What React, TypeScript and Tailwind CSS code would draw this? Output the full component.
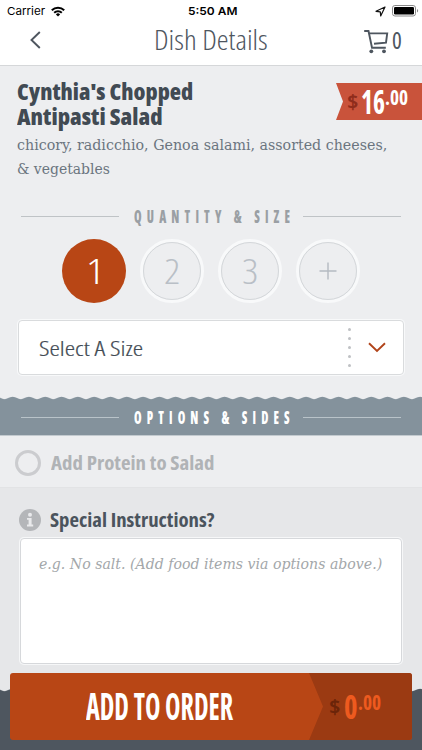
import { useLayoutEffect, useRef } from "react";
import type { ReactNode } from "react";

const sans = "font-['Open_Sans','Noto_Sans',sans-serif] [font-stretch:75%]";
const serif = "font-['DejaVu_Serif_Condensed','DejaVu_Serif',serif]";

// Squeezes one line of text to the width of its box
function Fit({ className, children }: { className: string; children: ReactNode }) {
  const box = useRef<HTMLSpanElement>(null);
  const text = useRef<HTMLSpanElement>(null);

  useLayoutEffect(() => {
    if (!box.current || !text.current) return;
    const scale = box.current.clientWidth / text.current.offsetWidth;
    text.current.style.transform = `scaleX(${scale})`;
  }, []);

  return (
    <span ref={box} className={`block shrink-0 whitespace-nowrap ${className}`}>
      <span ref={text} className="inline-block origin-left align-top">
        {children}
      </span>
    </span>
  );
}

function StatusBar() {
  return (
    <div className="flex h-[22px] items-center justify-between pl-[7px] pr-1 font-['Inter',sans-serif] text-[11px] leading-[22px] text-black">
      <div className="flex w-[140px] items-center gap-[6px]">
        <Fit className="w-[38px]">Carrier</Fit>
        <svg width="14" height="11" viewBox="0 0 14 11" fill="none" stroke="#000" strokeWidth="2">
          <path d="M0.8 4.2a8.8 8.8 0 0 1 12.4 0" />
          <path d="M3.2 6.8a5.4 5.4 0 0 1 7.6 0" />
          <path d="M7 10.6 4.9 8.4a3 3 0 0 1 4.2 0z" fill="#000" stroke="none" />
        </svg>
      </div>
      <Fit className="w-[50px] font-semibold">5:50 AM</Fit>
      <div className="flex w-[140px] items-center justify-end gap-[6px]">
        <svg width="11" height="11" viewBox="0 0 11 11" fill="none" stroke="#111" strokeWidth="1.2" strokeLinejoin="round">
          <path d="M10 1 1 5.3l4.3.5.4 4.2z" />
        </svg>
        <svg className="-mr-px" width="27" height="12" viewBox="0 0 27 12">
          <rect x="0.5" y="0.5" width="23" height="10.5" rx="2.4" fill="#fff" stroke="#8a8a8a" />
          <rect x="2" y="2" width="20" height="7.5" rx="1.2" fill="#000" />
          <path d="M25 4v3.6a2 2 0 0 0 0-3.6z" fill="#8a8a8a" />
        </svg>
      </div>
    </div>
  );
}

function Header() {
  return (
    <div className="flex h-[43px] items-start pl-[30px] text-[#4e565f]">
      <svg className="mt-[9px]" width="12" height="18" viewBox="0 0 12 18" fill="none" stroke="#4e565f" strokeWidth="1.9">
        <path d="M9.8 1 1.5 9l8.3 8" />
      </svg>
      <Fit className="ml-[112px] w-[114px] text-[27px] leading-[35px] font-light">Dish Details</Fit>
      <div className="ml-[96px] flex gap-[3px]">
        <svg className="mt-2" width="25" height="24" viewBox="0 0 25 24" fill="none" stroke="#4e565f" strokeWidth="1.9">
          <path d="M0.2 1H4.5L8 17.7H21.8" />
          <path d="M4.9 3.4H23.2L22 12.6 10 13.7" />
          <circle cx="7.3" cy="21.3" r="1.9" fill="#4e565f" stroke="none" />
          <circle cx="20" cy="21.3" r="1.9" fill="#4e565f" stroke="none" />
        </svg>
        <Fit className="w-[10px] text-[23px] font-medium leading-[36px]">0</Fit>
      </div>
    </div>
  );
}

function SectionTitle({ title, text, line }: { title: string; text: string; line: string }) {
  return (
    <div className="flex items-center px-[21px]">
      <div className={`h-px w-[98px] ${line}`} />
      <Fit className={`ml-[15px] w-[161px] text-[18px] font-extrabold leading-[18px] tracking-[0.42em] ${text}`}>
        {title}
      </Fit>
      <div className={`ml-[8px] h-px flex-1 ${line}`} />
    </div>
  );
}

function Quantity({ children }: { children: ReactNode }) {
  return (
    <button className="flex size-16 items-center justify-center rounded-full border-[3px] border-[#f8f9fa]">
      <span className="flex size-[58px] items-center justify-center rounded-full border border-[#d4d7da] text-[#b9bfc6]">
        {children}
      </span>
    </button>
  );
}

function Wave({ color, id }: { color: string; id: string }) {
  return (
    <svg className="block" width="422" height="4">
      <defs>
        <pattern id={id} x="4.5" width="16.3" height="4" patternUnits="userSpaceOnUse">
          <path d="M0 3.2C2.8 3.2 4.4 0.8 8.15 0.8S13.5 3.2 16.3 3.2V4H0z" fill={color} />
        </pattern>
      </defs>
      <rect width="422" height="4" fill={`url(#${id})`} />
    </svg>
  );
}

export default function App() {
  return (
    <div className={`relative flex h-[750px] w-[422px] flex-col overflow-hidden bg-[#edeef0] ${sans}`}>
      <header className="h-[66px] shrink-0 border-b border-[#d5d7d9] bg-white">
        <StatusBar />
        <Header />
      </header>

      {/* Dish */}
      <div className="flex h-[67px] shrink-0 justify-between pl-[17px] pt-[13px]">
        <div className="text-[22px] font-extrabold leading-[25px] text-[#414a53]">
          <Fit className="w-[176px]">Cynthia's Chopped</Fit>
          <Fit className="w-[146px]">Antipasti Salad</Fit>
        </div>
        <div className="mt-1 flex h-[37px] w-[86px] bg-[#c9533b] pl-[11px] font-bold text-white [clip-path:polygon(0_0,100%_0,100%_100%,0_100%,7px_50%)]">
          <Fit className="w-[11px] text-[20px] leading-[37px] text-[#8f2c1b]">$</Fit>
          <Fit className="ml-[3px] w-[24px] text-[33px] leading-[37px]">16</Fit>
          <Fit className="w-[23px] text-[21px] leading-[29px]">.00</Fit>
        </div>
      </div>
      <div className={`h-[74px] shrink-0 pl-[17px] text-[15px] leading-[24px] text-[#6b757f] ${serif}`}>
        <Fit className="w-[370px]">chicory, radicchio, Genoa salami, assorted cheeses,</Fit>
        <Fit className="w-[93px]">&amp; vegetables</Fit>
      </div>

      {/* Quantity and size */}
      <SectionTitle title="QUANTITY & SIZE" text="text-[#9a9fa4]" line="bg-[#bfc3c6]" />
      <div className="mt-[14px] flex gap-[14px] pl-[61.5px]">
        <button className="flex size-16 items-center justify-center rounded-full bg-[#b84615] text-white">
          <Fit className="w-[18px] text-[35px] font-light leading-[58px]">1</Fit>
        </button>
        <Quantity>
          <Fit className="w-[16px] text-[35px] font-light leading-[54px]">2</Fit>
        </Quantity>
        <Quantity>
          <Fit className="w-[16px] text-[35px] font-light leading-[54px]">3</Fit>
        </Quantity>
        <Quantity>
          <svg width="18" height="18" viewBox="0 0 18 18" stroke="#b4bac1" strokeWidth="1.4">
            <path d="M9 0.5v17M0.5 9h17" />
          </svg>
        </Quantity>
      </div>
      <div className="mx-[18px] mt-[17px] flex h-[55px] shrink-0 items-center rounded-[4px] border border-[#d9dbdd] bg-white pl-[20px] pr-[17px] shadow-[0_0_0_1px_#f8f9fa]">
        <Fit className="w-[104px] text-[21px] font-light leading-[28px] text-[#414a53] [-webkit-text-stroke:0.2px_#414a53]">
          Select A Size
        </Fit>
        <div className="ml-auto mr-[17px] flex flex-col gap-[6px]">
          {[0, 1, 2, 3, 4].map((i) => (
            <span key={i} className="size-[3px] rounded-full bg-[#bfc1c4]" />
          ))}
        </div>
        <svg width="18" height="11" viewBox="0 0 18 11" fill="none" stroke="#b1441a" strokeWidth="1.9">
          <path d="M1 1.2 9 9l8-7.8" />
        </svg>
      </div>

      {/* Options and sides */}
      <div className="mt-[21px] shrink-0">
        <Wave color="#84929c" id="band-wave" />
        <div className="h-[36px] border-b border-[#c3cacf] bg-[#84929c] pt-[8px]">
          <SectionTitle title="OPTIONS & SIDES" text="text-white" line="bg-[#b9c3c9]" />
        </div>
      </div>
      <div className="flex h-[52px] shrink-0 items-center gap-[10px] border-b border-[#e2e3e5] pl-[15px] pt-[3px]">
        <span className="size-[26px] rounded-full border-[3px] border-[#cbcccf]" />
        <Fit className="w-[163px] text-[20px] font-bold leading-[28px] text-[#b0b3b6]">Add Protein to Salad</Fit>
      </div>

      {/* Special instructions */}
      <div className="flex-1 bg-[#e6e7e9] px-[20px] pt-[18px]">
        <div className="flex h-[28px] items-center gap-[9px]">
          <svg className="-ml-px" width="22" height="22" viewBox="0 0 22 22">
            <circle cx="11" cy="11" r="11" fill="#b4b6b9" />
            <circle cx="11" cy="5.8" r="2" fill="#e9eaec" />
            <path d="M8 9h4.6v6.6h1.6v1.8H8v-1.8h1.6v-4.8H8z" fill="#e9eaec" />
          </svg>
          <Fit className="w-[164px] text-[20px] font-bold leading-[28px] text-[#4b545d]">Special Instructions?</Fit>
        </div>
        <div className="mt-[4px] h-[126px] rounded-[4px] border border-[#d6d8db] bg-white pl-[18px] pt-[13px] shadow-[0_0_0_1px_#f6f7f8]">
          <Fit className={`w-[343px] text-[15px] italic leading-[24px] text-[#a3a7aa] ${serif}`}>
            e.g. No salt. (Add food items via options above.)
          </Fit>
        </div>
      </div>

      {/* Order bar, stays over the end of the page */}
      <footer className="absolute inset-x-0 bottom-0">
        <Wave color="#4e565f" id="footer-wave" />
        <div className="h-[58px] bg-[#4e565f]" />
        <button className="absolute left-[10px] top-[-15px] flex h-[67px] w-[402px] overflow-hidden rounded-[3px] bg-[#b84615] font-bold text-white">
          <Fit className="ml-[76px] w-[147px] text-left text-[37px] leading-[65px]">ADD TO ORDER</Fit>
          <span className="ml-auto flex h-full w-[103px] bg-[#9b3a12] pl-[20px] text-left text-[#ee5a1f] [clip-path:polygon(0_0,100%_0,100%_100%,0_100%,14px_50%)]">
            <Fit className="w-[11px] text-[20px] leading-[67px] text-[#6b2409]">$</Fit>
            <Fit className="ml-[4px] w-[14px] text-[33px] leading-[67px]">0</Fit>
            <Fit className="w-[23px] text-[21px] leading-[58px]">.00</Fit>
          </span>
        </button>
      </footer>
    </div>
  );
}
